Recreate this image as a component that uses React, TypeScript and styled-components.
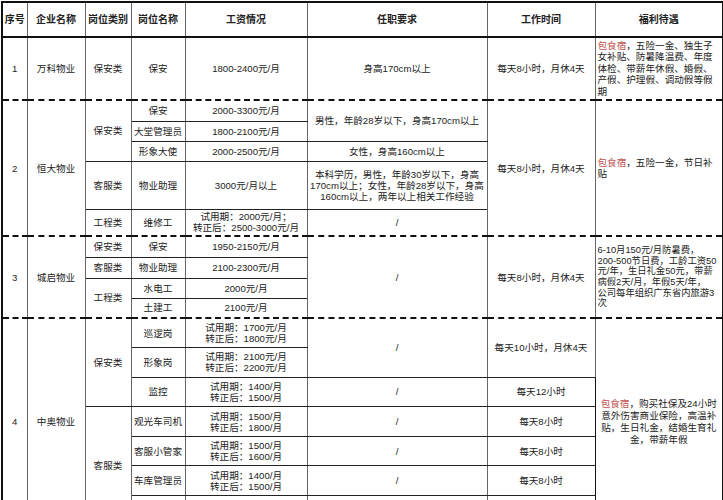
import React from 'react';
import styled, { createGlobalStyle, css } from 'styled-components';

const Global = createGlobalStyle`
  html, body { margin: 0; padding: 0; background: #fff; }
  body { font-family: "Liberation Sans", "Noto Sans CJK SC", sans-serif; color: #222; }
`;

const Page = styled.div`
  padding: 1px 0 0 1px;
`;

const Table = styled.table`
  border-collapse: collapse;
  table-layout: fixed;
  width: 721px;
  border: 2px solid #111;
  font-size: 9.6px;
  line-height: 11px;
`;

const Col = styled.col<{ $w: number }>`
  width: ${(p) => p.$w}px;
`;

const Th = styled.th`
  border: 1px solid #666;
  border-bottom: 2px solid #111;
  font-weight: bold;
  font-size: 10px;
  padding: 0;
  text-align: center;
  white-space: nowrap;
`;

const Row = styled.tr<{ $h: number; $start?: boolean }>`
  height: ${(p) => p.$h}px;
  ${(p) =>
    p.$start &&
    css`
      & > td {
        border-top: 2px dashed #111;
      }
    `}
`;

const Cell = styled.td<{ $align?: 'left' | 'center'; $size?: number; $lh?: number; $strong?: boolean }>`
  border-left: 1px solid #666;
  border-right: 1px solid #666;
  border-top: 1px solid #222;
  border-bottom: 1px solid #222;
  padding: 0 2px;
  text-align: ${(p) => p.$align ?? 'center'};
  vertical-align: middle;
  font-size: ${(p) => p.$size ?? 9.6}px;
  line-height: ${(p) => p.$lh ?? 11}px;
  white-space: nowrap;
  overflow: hidden;
  ${(p) =>
    p.$strong &&
    css`
      border-left: 1px solid #111;
    `}
`;

const Red = styled.span`
  color: #c0504d;
`;

const Lines: React.FC<{ lines: React.ReactNode[] }> = ({ lines }) => (
  <>
    {lines.map((l, i) => (
      <React.Fragment key={i}>
        {i > 0 && <br />}
        {l}
      </React.Fragment>
    ))}
  </>
);

const Pay: React.FC<{ a: string; b: string }> = ({ a, b }) => (
  <Lines lines={[`试用期：${a}`, `转正后：${b}`]} />
);

export default function App() {
  return (
    <Page>
      <Global />
      <Table>
        <colgroup>
          <Col $w={25} />
          <Col $w={58} />
          <Col $w={46} />
          <Col $w={54} />
          <Col $w={122} />
          <Col $w={180} />
          <Col $w={108} />
          <Col $w={128} />
        </colgroup>
        <thead>
          <tr style={{ height: 35 }}>
            <Th>序号</Th>
            <Th>企业名称</Th>
            <Th>岗位类别</Th>
            <Th>岗位名称</Th>
            <Th>工资情况</Th>
            <Th>任职要求</Th>
            <Th>工作时间</Th>
            <Th>福利待遇</Th>
          </tr>
        </thead>
        <tbody>
          <Row $h={63}>
            <Cell>1</Cell>
            <Cell>万科物业</Cell>
            <Cell>保安类</Cell>
            <Cell>保安</Cell>
            <Cell>1800-2400元/月</Cell>
            <Cell>身高170cm以上</Cell>
            <Cell>每天8小时，月休4天</Cell>
            <Cell $align="left" $strong $lh={11.6}>
              <Lines
                lines={[
                  <><Red>包食宿</Red>，五险一金、独生子</>,
                  '女补贴、防暑降温费、年度',
                  '体检、带薪年休假、婚假、',
                  '产假、护理假、调动假等假',
                  '期',
                ]}
              />
            </Cell>
          </Row>

          <Row $h={21} $start>
            <Cell rowSpan={5}>2</Cell>
            <Cell rowSpan={5}>恒大物业</Cell>
            <Cell rowSpan={3}>保安类</Cell>
            <Cell>保安</Cell>
            <Cell>2000-3300元/月</Cell>
            <Cell rowSpan={2}>男性，年龄28岁以下，身高170cm以上</Cell>
            <Cell rowSpan={5}>每天8小时，月休4天</Cell>
            <Cell rowSpan={5} $align="left" $strong>
              <Lines lines={[<><Red>包食宿</Red>，五险一金，节日补</>, '贴']} />
            </Cell>
          </Row>
          <Row $h={20}>
            <Cell>大堂管理员</Cell>
            <Cell>1800-2100元/月</Cell>
          </Row>
          <Row $h={20}>
            <Cell>形象大使</Cell>
            <Cell>2000-2500元/月</Cell>
            <Cell>女性，身高160cm以上</Cell>
          </Row>
          <Row $h={48}>
            <Cell>客服类</Cell>
            <Cell>物业助理</Cell>
            <Cell>3000元/月以上</Cell>
            <Cell>
              <Lines
                lines={[
                  '本科学历，男性，年龄30岁以下，身高',
                  '170cm以上；女性，年龄28岁以下，身高',
                  '160cm以上，两年以上相关工作经验',
                ]}
              />
            </Cell>
          </Row>
          <Row $h={27}>
            <Cell>工程类</Cell>
            <Cell>维修工</Cell>
            <Cell $lh={11}>
              <Lines lines={['试用期：2000元/月；', '转正后：2500-3000元/月']} />
            </Cell>
            <Cell>/</Cell>
          </Row>

          <Row $h={21} $start>
            <Cell rowSpan={4}>3</Cell>
            <Cell rowSpan={4}>城启物业</Cell>
            <Cell>保安类</Cell>
            <Cell>保安</Cell>
            <Cell>1950-2150元/月</Cell>
            <Cell rowSpan={4}>/</Cell>
            <Cell rowSpan={4}>每天8小时，月休4天</Cell>
            <Cell rowSpan={4} $align="left" $strong $size={9.3} $lh={10.6}>
              <Lines
                lines={[
                  '6-10月150元/月防暑费，',
                  '200-500节日费，工龄工资50',
                  '元/年，生日礼金50元，带薪',
                  '病假2天/月，年假5天/年，',
                  '公司每年组织广东省内旅游3',
                  '次',
                ]}
              />
            </Cell>
          </Row>
          <Row $h={21}>
            <Cell>客服类</Cell>
            <Cell>物业助理</Cell>
            <Cell>2100-2300元/月</Cell>
          </Row>
          <Row $h={20}>
            <Cell rowSpan={2}>工程类</Cell>
            <Cell>水电工</Cell>
            <Cell>2000元/月</Cell>
          </Row>
          <Row $h={20}>
            <Cell>土建工</Cell>
            <Cell>2100元/月</Cell>
          </Row>

          <Row $h={29.6} $start>
            <Cell rowSpan={7}>4</Cell>
            <Cell rowSpan={7}>中奥物业</Cell>
            <Cell rowSpan={3}>保安类</Cell>
            <Cell>巡逻岗</Cell>
            <Cell>
              <Pay a="1700元/月" b="1800元/月" />
            </Cell>
            <Cell rowSpan={2}>/</Cell>
            <Cell rowSpan={2}>每天10小时，月休4天</Cell>
            <Cell rowSpan={7} $strong $lh={12}>
              <Lines
                lines={[
                  <><Red>包食宿</Red>，购买社保及24小时</>,
                  '意外伤害商业保险，高温补',
                  '贴，生日礼金，结婚生育礼',
                  '金，带薪年假',
                ]}
              />
            </Cell>
          </Row>
          <Row $h={29.6}>
            <Cell>形象岗</Cell>
            <Cell>
              <Pay a="2100元/月" b="2200元/月" />
            </Cell>
          </Row>
          <Row $h={29.6}>
            <Cell>监控</Cell>
            <Cell>
              <Pay a="1400/月" b="1500/月" />
            </Cell>
            <Cell>/</Cell>
            <Cell>每天12小时</Cell>
          </Row>
          <Row $h={29.6}>
            <Cell rowSpan={4}>客服类</Cell>
            <Cell>观光车司机</Cell>
            <Cell>
              <Pay a="1500/月" b="1800/月" />
            </Cell>
            <Cell>/</Cell>
            <Cell>每天8小时</Cell>
          </Row>
          <Row $h={29.6}>
            <Cell>客服小管家</Cell>
            <Cell>
              <Pay a="1500/月" b="1600/月" />
            </Cell>
            <Cell>/</Cell>
            <Cell>每天8小时</Cell>
          </Row>
          <Row $h={29.6}>
            <Cell>车库管理员</Cell>
            <Cell>
              <Pay a="1400/月" b="1500/月" />
            </Cell>
            <Cell>/</Cell>
            <Cell>每天8小时</Cell>
          </Row>
          <Row $h={29.6}>
            <Cell />
            <Cell />
            <Cell />
            <Cell />
          </Row>
        </tbody>
      </Table>
    </Page>
  );
}
